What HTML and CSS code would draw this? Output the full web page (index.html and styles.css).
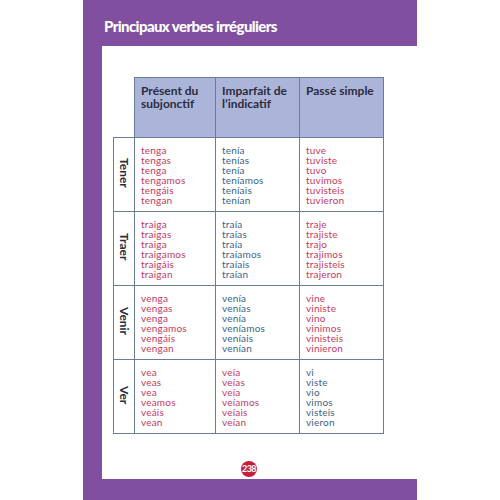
FILE: index.html
```html
<!DOCTYPE html>
<html lang="fr">
<head>
  <meta charset="UTF-8" />
  <title>Principaux verbes irréguliers</title>
  <link rel="stylesheet" href="styles.css">
</head>
<body>
  <div class="page">
    <div class="page-header">
      <h1>Principaux verbes irréguliers</h1>
    </div>
    <div class="page-body">
      <table class="verbs">
        <colgroup>
          <col class="col-label">
          <col class="col-a">
          <col class="col-b">
          <col class="col-c">
        </colgroup>
        <thead>
          <tr>
            <th class="blank"></th>
            <th>Présent du subjonctif</th>
            <th>Imparfait de l’indicatif</th>
            <th>Passé simple</th>
          </tr>
        </thead>
        <tbody>
          <tr>
            <th class="verb"><span>Tener</span></th>
            <td class="red">tenga<br>tengas<br>tenga<br>tengamos<br>tengáis<br>tengan</td>
            <td class="blue">tenía<br>tenías<br>tenía<br>teníamos<br>teníais<br>tenían</td>
            <td class="red">tuve<br>tuviste<br>tuvo<br>tuvimos<br>tuvisteis<br>tuvieron</td>
          </tr>
          <tr>
            <th class="verb"><span>Traer</span></th>
            <td class="red">traiga<br>traigas<br>traiga<br>traigamos<br>traigáis<br>traigan</td>
            <td class="blue">traía<br>traías<br>traía<br>traíamos<br>traíais<br>traían</td>
            <td class="red">traje<br>trajiste<br>trajo<br>trajimos<br>trajisteis<br>trajeron</td>
          </tr>
          <tr>
            <th class="verb"><span>Venir</span></th>
            <td class="red">venga<br>vengas<br>venga<br>vengamos<br>vengáis<br>vengan</td>
            <td class="blue">venía<br>venías<br>venía<br>veníamos<br>veníais<br>venían</td>
            <td class="red">vine<br>viniste<br>vino<br>vinimos<br>vinisteis<br>vinieron</td>
          </tr>
          <tr>
            <th class="verb"><span>Ver</span></th>
            <td class="red">vea<br>veas<br>vea<br>veamos<br>veáis<br>vean</td>
            <td class="red">veía<br>veías<br>veía<br>veíamos<br>veíais<br>veían</td>
            <td class="blue">vi<br>viste<br>vio<br>vimos<br>visteis<br>vieron</td>
          </tr>
        </tbody>
      </table>
      <div class="page-number">238</div>
    </div>
  </div>
</body>
</html>
```

FILE: styles.css
```css
body {
  margin: 0;
  background: #ffffff;
  font-family: Lato, "Open Sans", sans-serif;
}

.page {
  width: 334px;
  height: 500px;
  margin-left: 83px;
  background: #804fa0;
}

.page-header {
  height: 46px;
  padding-left: 21px;
  box-sizing: border-box;
  padding-top: 16px;
}

h1 {
  margin: 0;
  color: #ffffff;
  font-size: 15px;
  font-weight: 900;
  letter-spacing: -0.6px;
  line-height: 20px;
}

.page-body {
  margin-left: 19px;
  height: 433px;
  background: #ffffff;
  padding: 31px 0 0 11px;
  box-sizing: border-box;
}

.verbs {
  border-collapse: collapse;
  table-layout: fixed;
  width: 270px;
}

.col-label { width: 21px; }
.col-a { width: 81px; }
.col-b { width: 84px; }
.col-c { width: 84px; }

.verbs thead th {
  height: 60px;
  box-sizing: border-box;
  background: #abb5da;
  border: 1px solid #6a7d99;
  color: #2b2b3b;
  font-size: 12px;
  font-weight: bold;
  line-height: 13px;
  text-align: left;
  vertical-align: top;
  padding: 6px 6px;
}

.verbs thead th.blank {
  background: none;
  border: none;
  border-bottom: 1px solid #6a7d99;
}

.verbs td {
  border: 1px solid #6a7d99;
  font-size: 10px;
  line-height: 10px;
  letter-spacing: 0.2px;
  vertical-align: top;
  padding: 7px 6px 6px;
}

.verb {
  border: 1px solid #6a7d99;
  padding: 0;
  vertical-align: middle;
  text-align: center;
}

.verb span {
  writing-mode: vertical-rl;
  font-size: 12px;
  font-weight: bold;
  color: #2b2b3b;
  display: inline-block;
}

.red { color: #c23a62; }
.blue { color: #3e5f86; }

.page-number {
  width: 16px;
  height: 16px;
  border-radius: 50%;
  background: #c41f3d;
  color: #ffffff;
  font-size: 9px;
  font-weight: bold;
  line-height: 16px;
  text-align: center;
  letter-spacing: -0.5px;
  margin: 27px 0 0 128px;
}
```
